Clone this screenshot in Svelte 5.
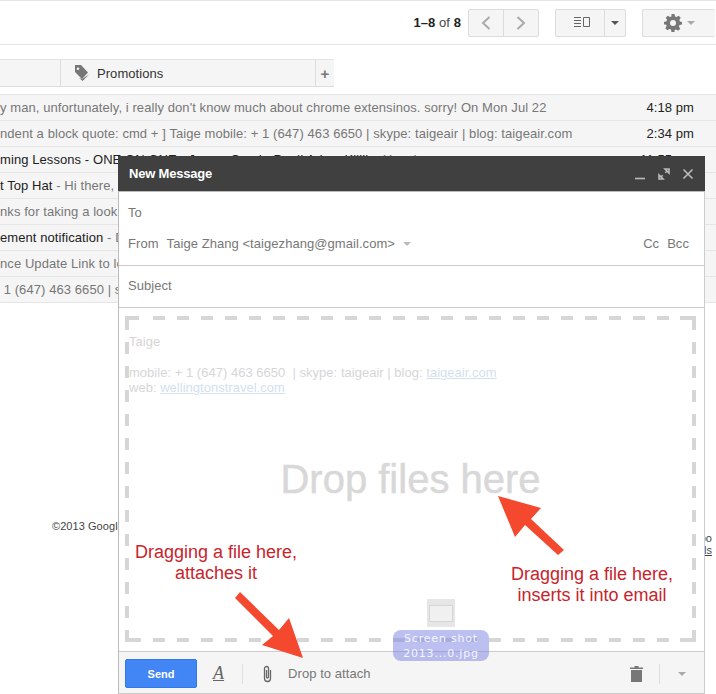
<script>
  const rows = [
    { lead: '', text: 'y man, unfortunately, i really don\'t know much about chrome extensinos. sorry! On Mon Jul 22', time: '4:18 pm' },
    { lead: '', text: 'ndent a block quote: cmd + ] Taige mobile: + 1 (647) 463 6650 | skype: taigeair | blog: taigeair.com', time: '2:34 pm' },
    { lead: 'ming Lessons - ONE ON ONE - Jason, Sarah, Paul! Adam Killik', text: ' - You do', time: '11:55 am' },
    { lead: 't Top Hat', text: ' - Hi there,', time: '' },
    { lead: '', text: 'nks for taking a look', time: '' },
    { lead: 'ement notification', text: ' - D', time: '' },
    { lead: '', text: 'nce Update Link to lo', time: '' },
    { lead: '', text: ' 1 (647) 463 6650 | s', time: '' }
  ];
</script>

<div class="page">
  <header class="toolbar">
    <span class="count"><b>1–8</b> of <b>8</b></span>
    <div class="btn-group pager">
      <button aria-label="Newer">
        <svg width="12" height="16" viewBox="0 0 12 16"><path d="M9.5 2 3 8l6.5 6" /></svg>
      </button>
      <button aria-label="Older">
        <svg width="12" height="16" viewBox="0 0 12 16"><path d="M2.5 2 9 8l-6.5 6" /></svg>
      </button>
    </div>
    <div class="btn-group split">
      <button aria-label="Split pane">
        <svg class="thin" width="16" height="11" viewBox="0 0 16 11"><path d="M0 .5h7M0 3.5h7M0 6.500h7M0 9.500h7M9.500.5h6v9h-6z" /></svg>
      </button>
      <button aria-label="Split options"><i class="caret dark"></i></button>
    </div>
    <div class="btn-group gear">
      <button aria-label="Settings">
        <svg width="18" height="18" viewBox="0 0 24 24"><path class="solid" fill-rule="evenodd" d="M10 0h4l.7 3.3 2 .8L19.500 2.300l2.800 2.800-1.800 2.800.8 2L24 10.500v3.500l-3.300.7-.8 2 1.800 2.800-2.800 2.800-2.800-1.800-2 .8L14 24h-4l-.7-3.300-2-.8-2.800 1.800-2.800-2.800 1.800-2.800-.8-2L0 14v-3.500l3.300-.7.8-2-1.800-2.800 2.800-2.800 2.800 1.800 2-.8zM12 8a4 4 0 1 0 0 8 4 4 0 0 0 0-8z" /></svg>
        <i class="caret"></i>
      </button>
    </div>
  </header>

  <nav class="tabs">
    <div class="tab blank"></div>
    <div class="tab promo">
      <svg width="16" height="16" viewBox="0 0 16 16"><path class="solid" d="M1 0h6l7 7.500L8 14 1 7zM4 2.500a1.300 1.300 0 1 0 0 2.600 1.300 1.300 0 0 0 0-2.600z" fill-rule="evenodd" /><path class="solid" d="M15 9.500 8.500 16 5 12.800l3 1.200z" /></svg>
      Promotions
    </div>
    <div class="tab plus">+</div>
  </nav>

  <ul class="list">
    {#each rows as row}
      <li>
        <span class="snippet"><b>{row.lead}</b>{row.text}</span>
        <time>{row.time}</time>
      </li>
    {/each}
  </ul>

  <footer class="page-foot">
    <span>©2013 Google</span>
    <span class="details">po<br /><u>ls</u></span>
  </footer>

  <section class="compose">
    <div class="compose-head">
      <strong>New Message</strong>
      <div class="win-icons">
        <svg width="12" height="12" viewBox="0 0 12 12"><path d="M1 10.500h10" /></svg>
        <svg width="12" height="12" viewBox="0 0 12 12"><path d="M7 1h4v4zM5 11H1V7zM9 3 7.300 4.700M3 9l1.700-1.700" /></svg>
        <svg width="12" height="12" viewBox="0 0 12 12"><path d="m1.500 1.500 9 9m0-9-9 9" /></svg>
      </div>
    </div>

    <div class="recipients">
      <div class="to">To</div>
      <div class="from">
        <span class="from-label">From</span>
        <span>Taige Zhang &lt;taigezhang@gmail.com&gt;</span>
        <i class="caret"></i>
        <span class="cc">Cc</span>
        <span>Bcc</span>
      </div>
    </div>

    <div class="subject">Subject</div>

    <div class="body">
      <div class="dropzone">
        <svg class="dashes" width="571" height="326" viewBox="0 0 571 326">
          <path d="M2 14V2H14M555 2H569V14M569 314V324H555M16 324H2V314" />
          <path class="dash" d="M28 2H544M28 324H544M2 26V302M569 26V302" />
        </svg>
        <p class="sig-name">Taige</p>
        <p>mobile: + 1 (647) 463 6650 &nbsp;| skype: taigeair | blog: <u>taigeair.com</u><br />web: <u>wellingtonstravel.com</u></p>
        <div class="drop-title">Drop files here</div>
      </div>
    </div>

    <div class="compose-foot">
      <button class="send">Send</button>
      <span class="format">A</span>
      <span class="rule"></span>
      <svg class="clip" width="11" height="18" viewBox="0 0 11 18"><path d="M8.500 5v8.500a3 3 0 0 1-6 0V3.500a2 2 0 0 1 4 0V12a1 1 0 0 1-2 0V5" /></svg>
      <span class="attach">Drop to attach</span>
      <svg class="trash" width="13" height="16" viewBox="0 0 13 16"><path class="solid" d="M4.500 0h4v1.500H13V3H0V1.500h4.500zM1 4h11v12H1z" /></svg>
      <span class="rule end"></span>
      <i class="caret"></i>
    </div>
  </section>

  <div class="drag-file">
    <div class="thumb"><span></span></div>
    <div class="drag-name">Screen shot<br />2013...0.jpg</div>
  </div>

  <div class="note note-left">Dragging a file here,<br />attaches it</div>
  <div class="note note-right">Dragging a file here,<br />inserts it into email</div>

  <svg class="arrows" width="716" height="694" viewBox="0 0 716 694">
    <path d="M240 592 279 630 289 618 303 658 262 645 273 636 235 598z" />
    <path d="M498 496 541 508 531 519 564 550 558 555 525 525 515 537z" />
  </svg>
</div>

<style>
  :global(body) {
    margin: 0;
    background: #fff;
  }
  .page {
    position: relative;
    width: 716px;
    height: 694px;
    overflow: hidden;
    font-family: "Liberation Sans", Arial, sans-serif;
    font-size: 13px;
    letter-spacing: 0.06px;
    color: #222;
    border-top: 1px solid #e5e5e5;
    box-sizing: border-box;
  }
  svg path {
    fill: none;
    stroke: #777;
  }
  svg path.solid {
    fill: #777;
    stroke: none;
  }
  .caret {
    display: inline-block;
    width: 0;
    height: 0;
    border: 4px solid transparent;
    border-bottom: 0;
    border-top-color: #aaa;
  }
  .caret.dark {
    border-top-color: #555;
  }

  .toolbar {
    display: flex;
    align-items: center;
    justify-content: flex-end;
    height: 43px;
    border-bottom: 1px solid #e5e5e5;
    box-sizing: content-box;
  }
  .count {
    margin-right: 7px;
    color: #444;
  }
  .count b {
    color: #222;
  }
  .btn-group {
    display: flex;
    height: 28px;
    box-sizing: border-box;
    border: 1px solid #dcdcdc;
    border-radius: 2px;
    background: #f5f5f5;
  }
  .btn-group button {
    display: flex;
    align-items: center;
    justify-content: center;
    padding: 0;
    border: 0;
    background: none;
  }
  .btn-group button + button {
    border-left: 1px solid #dcdcdc;
  }
  .pager {
    width: 71px;
    margin-right: 16px;
  }
  .pager button {
    flex: 1;
  }
  .pager path {
    stroke: #aaa;
    stroke-width: 2;
  }
  .split {
    width: 71px;
    margin-right: 16px;
  }
  .split button:first-child {
    flex: 1;
  }
  .split button:last-child {
    width: 21px;
  }
  .thin {
    margin-left: 3px;
  }
  .thin path {
    stroke: #666;
    stroke-width: 1;
  }
  .gear {
    width: 73px;
    border-right: 0;
    margin-right: 1px;
  }
  .gear button {
    flex: 1;
    gap: 5px;
  }

  .tabs {
    display: flex;
    height: 28px;
    margin-top: 14px;
    width: 334px;
    background: #f5f5f5;
    border-top: 1px solid #e5e5e5;
    border-bottom: 1px solid #ddd;
    box-sizing: border-box;
  }
  .tab {
    display: flex;
    align-items: center;
  }
  .blank {
    width: 60px;
  }
  .promo {
    width: 256px;
    gap: 7px;
    padding-left: 13px;
    box-sizing: border-box;
    border-left: 1px solid #ddd;
    border-right: 1px solid #ddd;
    color: #333;
  }
  .plus {
    flex: 1;
    justify-content: center;
    font-weight: bold;
    font-size: 15px;
    color: #777;
  }

  .list {
    list-style: none;
    margin: 7px 0 0;
    padding: 0;
    border-top: 1px solid #e5e5e5;
    letter-spacing: 0.08px;
  }
  .list li {
    display: flex;
    justify-content: space-between;
    align-items: center;
    height: 25px;
    padding-right: 22px;
    background: #f5f5f5;
    border-bottom: 1px solid #e5e5e5;
    white-space: pre;
    color: #777;
  }
  .list b {
    font-weight: normal;
    color: #222;
  }
  .list time {
    color: #222;
  }

  .page-foot {
    display: flex;
    justify-content: space-between;
    align-items: flex-start;
    margin-top: 217px;
    padding: 0 4px 0 52px;
    font-size: 11px;
    color: #444;
  }
  .details {
    margin-top: 12px;
    line-height: 12px;
    text-align: right;
  }

  .compose {
    position: absolute;
    left: 118px;
    top: 155px;
    width: 587px;
    height: 538px;
    display: flex;
    flex-direction: column;
    background: #fff;
    border-left: 1px solid #bbb;
    border-right: 1px solid #ccc;
    border-bottom: 1px solid #ccc;
    box-sizing: border-box;
    color: #777;
  }
  .compose-head {
    display: flex;
    align-items: center;
    justify-content: space-between;
    flex: none;
    height: 36px;
    margin: 0 -1px;
    padding: 0 11px;
    background: #404040;
    border-bottom: 1px solid #bbb;
    box-sizing: border-box;
  }
  .compose-head strong {
    font-size: 13px;
    letter-spacing: -0.2px;
    color: #fff;
  }
  .win-icons {
    display: flex;
    gap: 12px;
  }
  .win-icons path {
    stroke: #bbb;
    stroke-width: 1.6;
  }
  .recipients {
    flex: none;
    height: 73px;
    padding: 0 15px 0 9px;
    border-bottom: 1px solid #ccc;
  }
  .to {
    padding-top: 13px;
    line-height: 15px;
  }
  .from {
    display: flex;
    align-items: center;
    gap: 8px;
    margin-top: 16px;
    line-height: 15px;
  }
  .from .caret {
    border-top-color: #bbb;
  }
  .cc {
    margin-left: auto;
  }
  .subject {
    flex: none;
    height: 41px;
    line-height: 39px;
    padding-left: 9px;
    border-bottom: 1px solid #ccc;
  }
  .body {
    flex: 1;
    padding: 8px 8px 9px 6px;
    min-height: 0;
  }
  .dropzone {
    position: relative;
    height: 100%;
    box-sizing: border-box;
    padding: 18px 4px 0;
    color: #d6d6d6;
    letter-spacing: 0.02px;
  }
  .dashes {
    position: absolute;
    left: 0;
    top: 0;
  }
  .dashes path {
    stroke: #d6d6d6;
    stroke-width: 4;
  }
  .dashes path.dash {
    stroke-dasharray: 12 12;
  }
  .dropzone p {
    position: relative;
    margin: 0;
    line-height: 15px;
  }
  .sig-name {
    margin-bottom: 16px !important;
  }
  .dropzone u {
    color: #d3dfee;
  }
  .drop-title {
    position: absolute;
    left: 0;
    right: 0;
    top: 140px;
    text-align: center;
    font-size: 40px;
    line-height: 46px;
    letter-spacing: 0;
    color: #d8d8d8;
    -webkit-text-stroke: 0.5px #d8d8d8;
  }
  .compose-foot {
    display: flex;
    align-items: center;
    flex: none;
    height: 42px;
    box-sizing: border-box;
    padding: 2px 18px 0 6px;
    background: #f5f5f5;
    border-top: 1px solid #ccc;
  }
  .send {
    width: 72px;
    height: 29px;
    padding: 0;
    background: #4285f4;
    border: 1px solid #3079ed;
    border-radius: 2px;
    color: #fff;
    font: bold 11px "Liberation Sans", Arial, sans-serif;
  }
  .format {
    margin-left: 16px;
    font: italic 18px "Liberation Serif", serif;
    text-decoration: underline;
    color: #666;
  }
  .rule {
    width: 1px;
    height: 20px;
    margin-left: 18px;
    background: #ddd;
  }
  .clip {
    margin-left: 19px;
  }
  .clip path {
    stroke: #666;
    stroke-width: 1.300;
  }
  .attach {
    margin-left: 15px;
    margin-right: auto;
  }
  .rule.end {
    margin-left: 16px;
    margin-right: 18px;
  }

  .drag-file {
    position: absolute;
    left: 393px;
    top: 598px;
    width: 96px;
  }
  .thumb {
    width: 28px;
    height: 28px;
    margin: 0 auto 3px;
    background: #e6e6e6;
    display: flex;
    align-items: center;
    justify-content: center;
  }
  .thumb span {
    width: 22px;
    height: 15px;
    background: #f0f0f0;
    border: 1px solid #d5d5d5;
  }
  .drag-name {
    height: 30px;
    padding-top: 1px;
    border-radius: 8px;
    background: rgba(120, 130, 225, 0.5);
    color: #f4f4ff;
    font: 11px/15px "DejaVu Sans", sans-serif;
    letter-spacing: 0.8px;
    text-align: center;
  }

  .note {
    position: absolute;
    font-size: 18px;
    line-height: 21px;
    letter-spacing: 0;
    color: #c8242c;
    text-align: center;
    white-space: nowrap;
  }
  .note-left {
    left: 135px;
    top: 541px;
  }
  .note-right {
    left: 511px;
    top: 563px;
  }
  .arrows {
    position: absolute;
    left: 0;
    top: -1px;
    pointer-events: none;
  }
  .arrows path {
    fill: #f4492f;
    stroke: none;
  }
</style>
